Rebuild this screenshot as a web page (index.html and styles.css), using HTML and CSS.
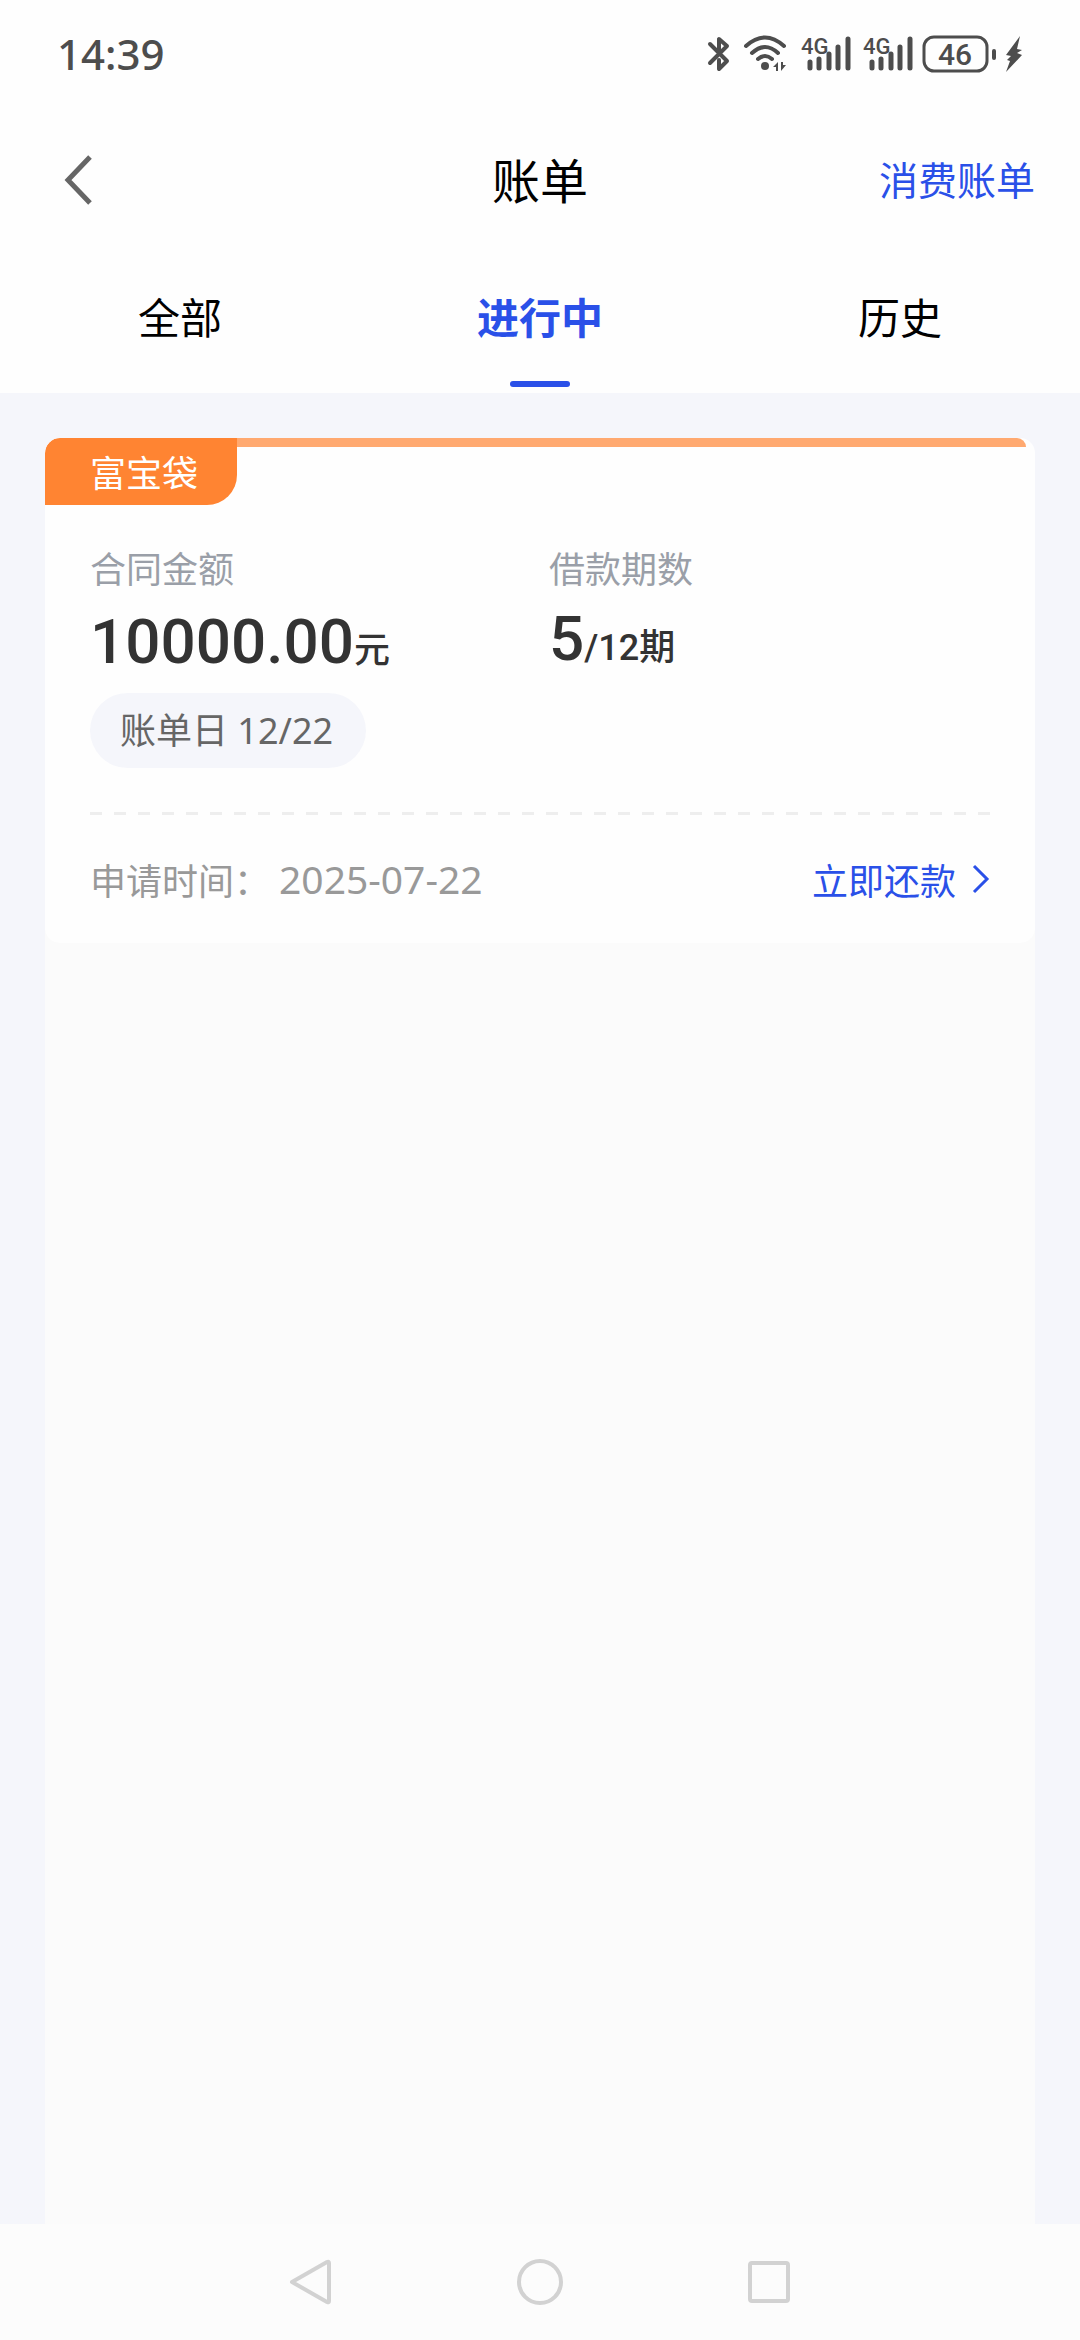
FILE: index.html
```html
<!DOCTYPE html>
<html lang="zh-CN">
<head>
<meta charset="utf-8">
<meta name="viewport" content="width=device-width, initial-scale=1">
<title>账单</title>
<link rel="stylesheet" href="styles.css">
</head>
<body>
<div class="page">
  <div class="status">
    <time class="clock">14:39</time>
    <div class="indicators">
      <svg width="24" height="38" viewBox="0 0 24 38" fill="none" stroke="currentColor" stroke-width="4" stroke-linecap="round" stroke-linejoin="round"><path d="M3 9 L20 26 L12 34 V25 M3 28 L20 11 L12 4 V17"/></svg>
      <svg width="46" height="38" viewBox="0 0 46 38" fill="none" stroke="currentColor" stroke-width="4" stroke-linecap="round"><path d="M3 11 Q22 -6 41 11 M9 18 Q22 6 35 18 M15 24 Q22 18 29 24"/><circle cx="22" cy="31" r="4" fill="currentColor" stroke="none"/><path d="M35 27 V36 H33 V32 H30 Z M38 27 V36 L43 30 H40 V27 Z" fill="currentColor" stroke="none"/></svg>
      <svg class="signal" width="50" height="38" viewBox="0 0 50 38"><text x="0" y="19">4G</text><path d="M9 27 V33 M18 24 V33 M28 19 V33 M37 12 V33 M47 4 V33"/></svg>
      <svg class="signal" width="50" height="38" viewBox="0 0 50 38"><text x="0" y="19">4G</text><path d="M9 27 V33 M18 24 V33 M28 19 V33 M37 12 V33 M47 4 V33"/></svg>
      <svg class="battery" width="76" height="38" viewBox="0 0 76 38"><rect x="3" y="2" width="63" height="34" rx="10" fill="none" stroke="currentColor" stroke-width="3"/><text x="34" y="30" text-anchor="middle">46</text><path d="M73 16 V23" stroke="currentColor" stroke-width="4" stroke-linecap="round"/></svg>
      <svg class="bolt" width="18" height="38" viewBox="0 0 18 38" fill="currentColor"><path d="M15 1 L1 20 L6 21 L2 25 L5 26 L1 37 L17 20 L12 18 L17 15 L12 14 Z"/></svg>
    </div>
  </div>

  <header class="topbar">
    <button class="back" type="button" aria-label="返回"><svg width="30" height="50" viewBox="0 0 30 50" fill="none" stroke="currentColor" stroke-width="5"><path d="M27 2 L5 25 L27 48"/></svg></button>
    <h1 class="title">账单</h1>
    <a class="toplink" href="#">消费账单</a>
  </header>

  <nav class="tabs">
    <a class="tab" href="#">全部</a>
    <a class="tab active" href="#" aria-current="page">进行中</a>
    <a class="tab" href="#">历史</a>
  </nav>

  <main class="content">
    <div class="list">
      <article class="card">
        <div class="ribbon"><span class="tag">富宝袋</span><span class="strip"></span></div>
        <div class="facts">
          <div class="fact">
            <span class="label">合同金额</span>
            <strong class="value">10000.00<span class="unit">元</span></strong>
            <span class="pill">账单日 12/22</span>
          </div>
          <div class="fact">
            <span class="label">借款期数</span>
            <strong class="value periods">5<span class="unit">/12期</span></strong>
          </div>
        </div>
        <div class="divider"></div>
        <footer class="foot">
          <span>申请时间：</span>
          <time class="date">2025-07-22</time>
          <a class="repay" href="#">立即还款<svg width="18" height="30" viewBox="0 0 18 30" fill="none" stroke="currentColor" stroke-width="3"><path d="M2 2 L15 15 L2 28"/></svg></a>
        </footer>
      </article>
    </div>
  </main>

  <div class="sysnav">
    <button type="button" aria-label="后退"><svg width="48" height="48" viewBox="0 0 48 48"><path d="M5 24 L40 4 Q42 3 42 5 V43 Q42 45 40 44 Z"/></svg></button>
    <button type="button" aria-label="主屏幕"><svg width="48" height="48" viewBox="0 0 48 48"><circle cx="24" cy="24" r="21"/></svg></button>
    <button type="button" aria-label="最近任务"><svg width="48" height="48" viewBox="0 0 48 48"><rect x="5" y="5" width="38" height="38" rx="2"/></svg></button>
  </div>
</div>
</body>
</html>
```
FILE: styles.css
```css
* { box-sizing: border-box; }

body {
  margin: 0;
  background: #fefefe;
  color: #000;
  font-family: "Noto Sans CJK SC", sans-serif;
  font-size: 36px;
  line-height: 48px;
}

a { color: inherit; text-decoration: none; }

button {
  border: 0;
  padding: 0;
  background: none;
  color: inherit;
  font: inherit;
}

svg { display: block; }

.page {
  display: flex;
  flex-direction: column;
  min-height: 100vh;
}

/* Status bar */
.status {
  display: flex;
  align-items: center;
  justify-content: space-between;
  height: 108px;
  padding: 0 57px;
  color: #4d4d4d;
}

.clock {
  font-family: "Noto Sans", sans-serif;
  font-size: 42px;
  font-weight: 500;
}

.indicators {
  display: flex;
  align-items: center;
  gap: 12px;
}

.signal text {
  font: 500 22px Roboto, sans-serif;
  fill: currentColor;
}

.signal path {
  fill: none;
  stroke: currentColor;
  stroke-width: 5px;
  stroke-linecap: round;
}

.battery text {
  font: 500 30px Roboto, sans-serif;
  fill: currentColor;
}

.battery { margin-left: -4px; }
.bolt { margin-left: -4px; }

/* Title bar */
.topbar {
  display: grid;
  grid-template-columns: 1fr auto 1fr;
  align-items: center;
  height: 144px;
  padding: 0 45px 4px;
}

.back { justify-self: start; padding: 4px 0 0 18px; color: #666; }

.title {
  margin: 0;
  font-size: 48px;
  font-weight: 400;
}

.toplink {
  justify-self: end;
  font-size: 39px;
  color: #2a50e8;
}

/* Tabs */
.tabs {
  display: grid;
  grid-template-columns: repeat(3, 1fr);
  padding: 34px 0 6px;
}

.tab {
  display: flex;
  flex-direction: column;
  align-items: center;
  gap: 35px;
  font-size: 42px;
  line-height: 60px;
}

.tab::after {
  content: "";
  width: 60px;
  height: 6px;
  border-radius: 3px;
}

.active { color: #2a50e8; font-weight: 700; }
.active::after { background: #2a50e8; }

/* Bill list */
.content {
  flex: 1;
  display: flex;
  flex-direction: column;
  padding: 45px 45px 0;
  background: #f5f6fb;
}

.list { flex: 1; background: linear-gradient(#f5f6fb 45px, #fbfbfb 45px); }

.card {
  border-radius: 15px;
  background: #fefefe;
  overflow: hidden;
}

.ribbon {
  display: flex;
  padding-right: 9px;
}

.tag {
  padding: 9px 39px 10px 45px;
  border-radius: 15px 0 30px 0;
  background: #ff8432;
  color: #fff;
}

.strip {
  flex: 1;
  height: 9px;
  border-radius: 0 9px 0 0;
  background: #ffa970;
}

.facts {
  display: grid;
  grid-template-columns: 1fr 1fr;
  gap: 18px;
  padding: 38px 45px 44px;
}

.fact {
  display: flex;
  flex-direction: column;
  align-items: flex-start;
}

.label { color: #9a9fa8; }

.value {
  padding-top: 15px;
  font-family: Roboto, "Noto Sans CJK SC", sans-serif;
  font-size: 62px;
  font-weight: 500;
  line-height: 72px;
  color: #333;
}

.periods { line-height: 66px; }

.unit { font-size: 36px; line-height: 48px; }

.pill {
  margin-top: 15px;
  padding: 14px 33px 13px 30px;
  border-radius: 38px;
  background: #f5f6fb;
  color: #666;
  font-family: "Noto Sans", "Noto Sans CJK SC", sans-serif;
}

.divider {
  height: 3px;
  margin: 0 45px;
  background: repeating-linear-gradient(90deg, #eee 0 12px, transparent 12px 24px);
}

.foot {
  display: flex;
  align-items: center;
  gap: 9px;
  padding: 40px 45px;
  color: #999;
}

.date { font-family: "Noto Sans", sans-serif; font-size: 39px; }

.repay {
  display: flex;
  align-items: center;
  gap: 16px;
  margin-left: auto;
  color: #2a50e8;
}

/* System navigation */
.sysnav {
  display: flex;
  align-items: center;
  justify-content: center;
  gap: 181px;
  height: 116px;
  background: #fcfcfc;
}

.sysnav svg {
  fill: none;
  stroke: #d2d2d2;
  stroke-width: 4px;
  stroke-linejoin: round;
}
```
